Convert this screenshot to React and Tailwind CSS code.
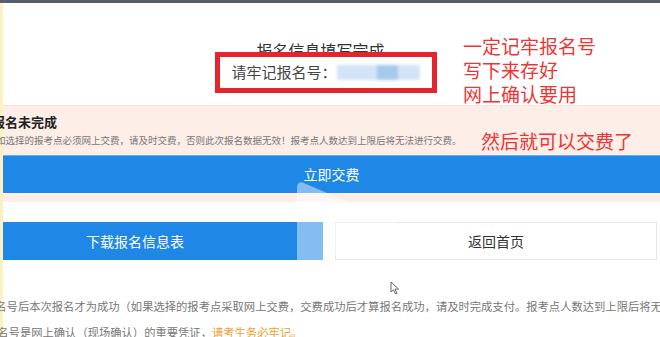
import React from "react";

const font = { fontFamily: '"Noto Sans CJK SC", "Noto Sans", sans-serif' };

const PlayShade = () => (
  <svg className="absolute left-0 top-0 pointer-events-none" width="660" height="337">
    <path d="M297 186 Q297 176 306 181 L405 223 L297 268 Z" fill="#ffffff" fillOpacity="0.45" />
  </svg>
);

const Cursor = () => (
  <svg className="absolute left-[390px] top-[278px]" width="10" height="14" viewBox="0 0 10 14">
    <path d="M1 1 L1 11 L3.5 8.8 L5.5 13 L7 12.3 L5 8.2 L8.5 8 Z" fill="#fff" stroke="#555" strokeWidth="0.9" />
  </svg>
);

const App = () => {
  return (
    <div className="relative w-[660px] h-[337px] overflow-hidden bg-white border-t-[3px] border-[#56606d] flex" style={font}>
      <div className="w-[3px] shrink-0 bg-[#fbf2c2]" />
      <div className="flex-1 min-w-0 flex flex-col">
        <div className="shrink-0 h-[102px] flex flex-col items-center pr-[12px] pt-[39px]">
          <div className="text-[16px] leading-[16px] text-[#333] ml-[-10px]">报名信息填写完成</div>
          <div className="relative mt-[-6px] bg-white border-[5px] border-[#e5242b] h-[41px] w-[222px] flex items-center px-[12px]">
            <span className="text-[15px] text-[#444] whitespace-nowrap">请牢记报名号：</span>
            <div className="relative w-[83px] h-[15px] bg-[#d3e4f6] blur-[1.5px] shrink-0">
              <div className="absolute left-[40px] top-0 w-[21px] h-[15px] bg-[#a7c9ec]" />
            </div>
          </div>
        </div>

        <div className="shrink-0 h-[97px] bg-[#fdeee8] border-t border-[#f7e2da] flex flex-col">
          <div className="ml-[-11px] mt-[9px] text-[13px] leading-[14px] font-bold text-[#222] whitespace-nowrap">报名未完成</div>
          <div className="ml-[-7px] mt-[6px] text-[9.5px] leading-[10px] text-[#777] whitespace-nowrap">
            如选择的报考点必须网上交费，请及时交费，否则此次报名数据无效！报考点人数达到上限后将无法进行交费。
          </div>
          <div className="shrink-0 mt-[10px] h-[38px] bg-[#1f87e5] border-t border-[#62aef0] flex items-center justify-center text-white text-[14px]">
            立即交费
          </div>
        </div>

        <div className="shrink-0 flex gap-[12px] mt-[20px] pr-[3px]">
          <div className="w-[320px] h-[38px] bg-[#1f87e5] flex items-center pl-[83px] text-white text-[14px] shrink-0">
            下载报名信息表
          </div>
          <div className="flex-1 h-[38px] border border-[#e6e6e6] bg-white flex items-center justify-center text-[#333] text-[14px]">
            返回首页
          </div>
        </div>

        <div className="shrink-0 mt-[33px] ml-[-19px] text-[11.3px] leading-[26px] text-[#777] whitespace-nowrap">
          <div>报名号后本次报名才为成功（如果选择的报考点采取网上交费，交费成功后才算报名成功，请及时完成支付。报考点人数达到上限后将无法进行交费）</div>
          <div className="ml-[2px]">报名号是网上确认（现场确认）的重要凭证，<span className="text-[#f0a030]">请考生务必牢记。</span></div>
        </div>
      </div>

      <PlayShade />
      <Cursor />

      <div className="absolute left-[463px] top-[31px] text-[19px] leading-[24px] text-[#ee3535]">
        <div>一定记牢报名号</div>
        <div>写下来存好</div>
        <div>网上确认要用</div>
      </div>
      <div className="absolute left-[481px] top-[126px] text-[19px] leading-[24px] text-[#ee3535]">然后就可以交费了</div>
    </div>
  );
};

export default App;
